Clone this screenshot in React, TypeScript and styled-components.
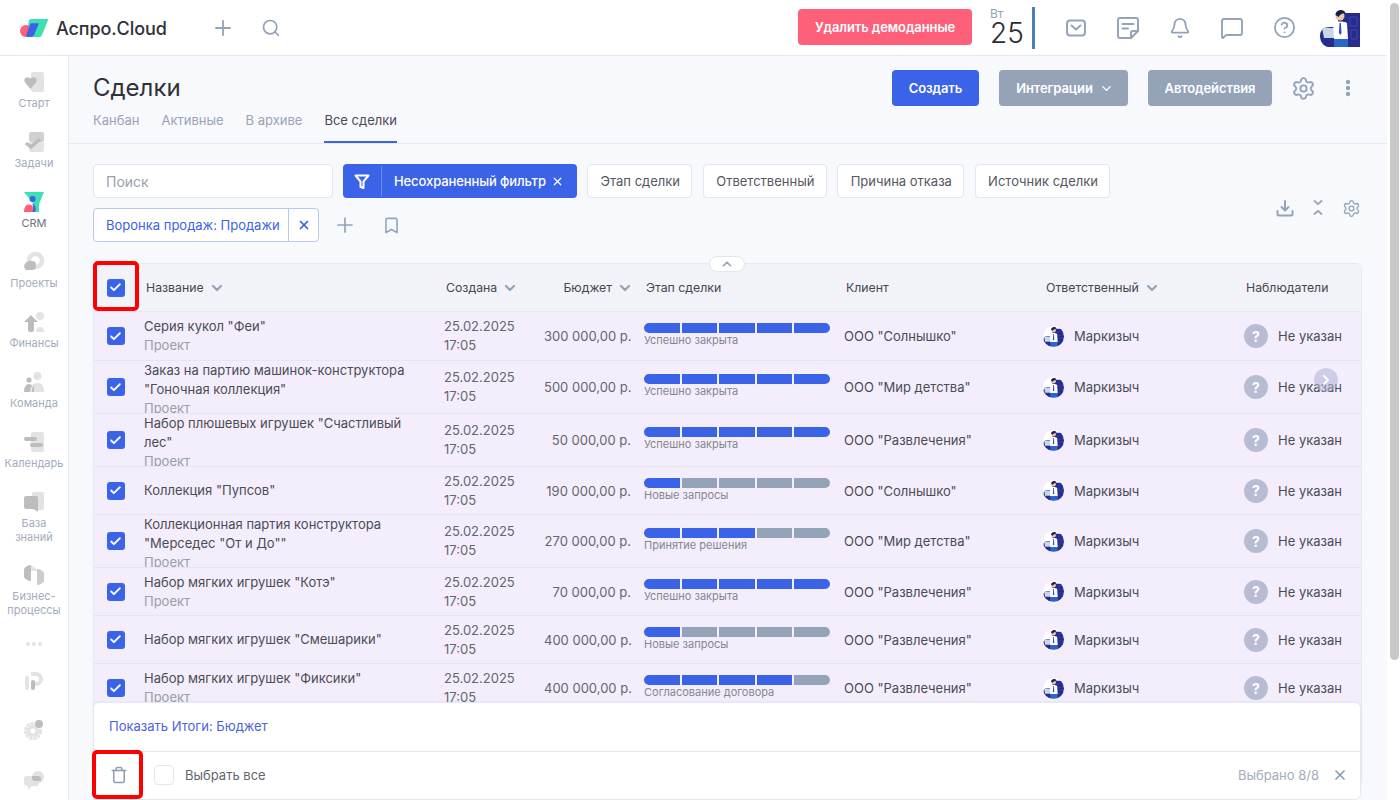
import React from "react";
import styled, { createGlobalStyle } from "styled-components";
import { Plus, Search, Bell, MessageSquare, CircleHelp, Settings, Bookmark, Trash, X, Check, ChevronDown, ChevronUp, ChevronRight } from "lucide-react";

const Global = createGlobalStyle`
  html, body { margin: 0; height: 800px; overflow: hidden; background: #fff; }
  body, button, input { font-family: Inter, "Noto Sans", sans-serif; }
  * { box-sizing: border-box; }
`;

const BLUE = "#3a63e8";
const MUTED = "#94a3b8";

const Shell = styled.div`display: flex; width: 1400px; height: 800px; overflow: hidden; background: #fff;`;
const Page = styled.div`width: 1387px; display: flex; flex-direction: column;`;
const ScrollTrack = styled.div`width: 13px; padding: 3px 1px 0 3px;`;
const ScrollThumb = styled.div`height: 657px; border-radius: 5px; background: #c8c8c8;`;

const TopBar = styled.header`
  height: 56px; flex: none; display: flex; align-items: center; background: #fff;
  border-bottom: 1px solid #e6e9f2; padding: 0 27px 0 19px;
`;
const Brand = styled.div`display: flex; align-items: center; gap: 7px; width: 192px;`;
const BrandName = styled.span`font-size: 18px; font-weight: 500; color: #2f3138; letter-spacing: -0.1px; padding-top: 2px;`;
const BarIcon = styled.span`
  display: flex; color: ${MUTED}; width: ${(p: { $w?: number }) => p.$w ?? 24}px; justify-content: center;
`;
const TopTools = styled.div`display: flex; gap: 24px; align-items: center; margin-left: 0; flex: 1;`;
const DangerButton = styled.button`
  height: 36px; width: 174px; border: 0; border-radius: 4px; background: #ff6079; color: #fff;
  font-size: 13px; font-weight: 600; letter-spacing: -0.1px; margin: 0 18px 1px 0;
`;
const DateBox = styled.div`
  width: 45px; height: 42px; border-right: 3px solid #4a80b4; position: relative; display: flex; flex-direction: column; margin-right: 29px;
`;
const Weekday = styled.span`font-size: 12px; line-height: 14px; color: ${MUTED};`;
const DayNum = styled.span`font-size: 28px; line-height: 25px; font-weight: 300; color: #2b2d33; letter-spacing: 0;`;
const BarIcons = styled.div`display: flex; gap: 28px; align-items: center; margin-right: 24px;`;

const Body = styled.div`flex: 1; display: flex; min-height: 0;`;
const Sidebar = styled.nav`
  width: 69px; flex: none; background: #fff; border-right: 1px solid #e6e9f2; padding-top: 16px;
  display: flex; flex-direction: column; align-items: center;
`;
const NavItem = styled.div`
  height: 60px; width: 100%; display: flex; flex-direction: column; align-items: center; gap: 4px; flex: none;
`;
const NavItemTall = styled(NavItem)`height: ${(p: { $h: number }) => p.$h}px;`;
const NavLabel = styled.span<{ $on?: boolean }>`
  font-size: 11px; line-height: 14px; color: ${(p) => (p.$on ? "#6b7280" : "#a3abbc")}; text-align: center;
`;
const NavIconOnly = styled.div`height: ${(p: { $h: number }) => p.$h}px; flex: none; display: flex; align-items: flex-start;`;

const Content = styled.main`flex: 1; min-width: 0; position: relative; background: #f8f9fd; overflow: hidden;`;
const PageHead = styled.div`
  height: 88px; display: flex; justify-content: space-between; padding: 14px 25px 0 24px; border-bottom: 1px solid #e6e9f2;
`;
const Title = styled.h1`margin: 0; font-size: 24px; line-height: 34px; height: 34px; padding-top: 1px; font-weight: 400; color: #2f3138;`;
const Tabs = styled.div`display: flex; gap: 22px;`;
const Tab = styled.div<{ $on?: boolean }>`
  font-size: 13px; line-height: 32px; height: 39px; color: ${(p) => (p.$on ? "#4a4c55" : "#9aa3b5")};
  border-bottom: 2px solid ${(p) => (p.$on ? BLUE : "transparent")};
`;
const HeadActions = styled.div`display: flex; align-items: flex-start;`;
const ActionButton = styled.button<{ $blue?: boolean; $w: number; $mr: number; $pl?: number }>`
  height: 36px; width: ${(p) => p.$w}px; margin-right: ${(p) => p.$mr}px; border: 0; border-radius: 4px; padding: 0 0 0 ${(p) => p.$pl ?? 0}px;
  background: ${(p) => (p.$blue ? BLUE : "#94a3b8")}; color: #fff; font-size: 13px; font-weight: 600; letter-spacing: -0.1px;
  display: flex; align-items: center; justify-content: center; gap: 6px;
`;
const HeadIcon = styled.span<{ $ml: number }>`
  display: flex; height: 36px; align-items: center; margin-left: ${(p) => p.$ml}px; color: ${MUTED};
`;

const FilterArea = styled.div`display: flex; justify-content: space-between; padding: 20px 26px 0 24px;`;
const FilterRows = styled.div`display: flex; flex-direction: column; gap: 10px;`;
const FilterRow = styled.div`display: flex; align-items: center;`;
const SearchBox = styled.div`
  width: 240px; height: 34px; border: 1px solid #e2e6f0; border-radius: 4px; background: #fff;
  font-size: 14px; color: #9aa0ad; display: flex; align-items: center; padding: 1px 0 0 12px; margin-right: 10px;
`;
const ActiveFilter = styled.div`
  width: 234px; height: 34px; border-radius: 4px; background: ${BLUE}; color: #fff; display: flex; align-items: center;
  font-size: 13px; font-weight: 500; margin-right: 10px; letter-spacing: -0.1px; gap: 5px;
`;
const FilterIconCell = styled.span`
  width: 39px; height: 30px; display: flex; align-items: center; justify-content: center;
  border-right: 1px solid rgba(255,255,255,.25); margin-right: 7px;
`;
const Chip = styled.div`
  height: 34px; padding: 0 11.3px 0 12.5px; border: 1px solid #e2e6f0; border-radius: 4px; background: #fff; margin-right: 10.4px;
  font-size: 13px; color: #555762; display: flex; align-items: center;
`;
const FunnelChip = styled.div`
  width: 226px; height: 34px; border: 1px solid #b9c7f5; border-radius: 4px; background: #fff; display: flex; align-items: center;
  font-size: 13px; color: ${BLUE}; font-weight: 400;
`;
const FunnelText = styled.span`flex: 1; padding-left: 12px; white-space: nowrap;`;
const FunnelClose = styled.span`
  width: 30px; height: 32px; border-left: 1px solid #b9c7f5; display: flex; align-items: center; justify-content: center;
`;
const PlainIcon = styled.span<{ $ml: number }>`display: flex; margin-left: ${(p) => p.$ml}px; color: ${MUTED};`;
const Tools = styled.div`display: flex; gap: 14px; align-items: flex-start; padding-top: 35px;`;

const TableWrap = styled.div`position: relative; margin: 21px 25px 0 24px;`;
const Collapse = styled.div`
  position: absolute; left: 616px; top: -7px; width: 36px; height: 16px; z-index: 2; background: #fff;
  border: 1px solid #e2e6f0; border-radius: 8px; display: flex; align-items: center; justify-content: center; color: ${MUTED};
`;
const Table = styled.div`
  height: 520px; border: 1px solid #e6e9f2; border-radius: 6px 6px 0 0; overflow: hidden; background: #fff;
`;
const cols = "50px 300px 100px 100px 200px 200px 200px 1fr";
const HeadRow = styled.div`
  display: grid; grid-template-columns: ${cols}; height: 48px; background: #f1f3f9; border-bottom: 1px solid #e6e9f2; align-items: center;
`;
const Th = styled.div<{ $right?: boolean }>`
  display: flex; align-items: center; gap: 7px; font-size: 12.3px; font-weight: 400; color: #45474f; padding-left: 2px; white-space: nowrap;
  ${(p) => p.$right && "justify-content: flex-end; padding-right: 13px;"}
`;
const CheckCell = styled.div`display: flex; justify-content: center; padding-right: 7px; align-items: center;`;
const Box = styled.span`
  width: 18px; height: 18px; border-radius: 3px; background: ${BLUE}; color: #fff; display: flex; align-items: center; justify-content: center;
`;
const Row = styled.div<{ $h: number }>`
  display: grid; grid-template-columns: ${cols}; height: ${(p) => p.$h}px; background: #f4eefc; border-bottom: 1px solid #e6e6f3; align-items: center;
`;
const NameCell = styled.div`
  height: 100%; overflow: hidden; display: flex; flex-direction: column; justify-content: safe center; min-width: 0;
  font-size: 13px; line-height: 19px; color: #4a4c55; padding-right: 30px;
`;
const NameText = styled.div`flex: none;`;
const Sub = styled.div`color: #9a9ca6; flex: none;`;
const DateCell = styled.div`font-size: 13px; line-height: 19px; color: #63656f;`;
const Money = styled.div`font-size: 13px; color: #63656f; text-align: right; padding-right: 13px; white-space: nowrap;`;
const Stage = styled.div`width: 186px; margin-top: -2px;`;
const Bar = styled.div`display: flex; gap: 2px; height: 10px; border-radius: 5px; overflow: hidden;`;
const Seg = styled.span<{ $on: boolean }>`flex: 1; background: ${(p) => (p.$on ? BLUE : "#94a3b8")};`;
const StageName = styled.div`font-size: 11px; line-height: 13px; margin-top: 1px; color: #85878f;`;
const Client = styled.div`font-size: 13px; color: #4a4c55; white-space: nowrap;`;
const Person = styled.div`display: flex; align-items: center; gap: 10px; font-size: 13px; color: #4a4c55; white-space: nowrap;`;
const Unknown = styled.span`
  width: 24px; height: 24px; border-radius: 50%; background: #b7bcd3; color: #fff; font-size: 14px; font-weight: 700;
  display: flex; align-items: center; justify-content: center; flex: none;
`;
const FloatArrow = styled.div`
  position: absolute; left: 1221px; top: 105px; width: 24px; height: 24px; border-radius: 50%;
  background: rgba(176, 176, 214, .55); color: #fff; display: flex; align-items: center; justify-content: center;
`;

const Footer = styled.div`
  position: absolute; left: 24px; top: 646px; width: 1268px; height: 98px; background: #fff; border: 1px solid #e6e9f2;
  border-radius: 6px; box-shadow: 0 -1px 3px rgba(120,130,170,.08); z-index: 3;
`;
const TotalsLine = styled.div`
  height: 49px; border-bottom: 1px solid #e6e9f2; padding: 0 0 2px 15px; display: flex; align-items: center;
  font-size: 13px; color: #4a62e0;
`;
const BulkLine = styled.div`height: 47px; display: flex; align-items: center; padding: 0 12px 1px 16px; color: #8c9db5;`;
const EmptyBox = styled.span`width: 20px; height: 20px; border: 1px solid #e2e6f0; border-radius: 4px; margin: 0 11px 0 26px;`;
const BulkText = styled.span`font-size: 13px; color: #63656f; flex: 1;`;
const Counter = styled.span`font-size: 13px; color: #a3abbc; margin-right: 13px;`;
const Marker = styled.div<{ $l: number; $t: number; $w: number; $h: number }>`
  position: absolute; left: ${(p) => p.$l}px; top: ${(p) => p.$t}px; width: ${(p) => p.$w}px; height: ${(p) => p.$h}px;
  border: 4px solid #f00; border-radius: 5px; z-index: 5; pointer-events: none;
`;

const L = "#e3e3e3";
const D = "#bdbdbd";

const Logo = () => (
  <svg width="30" height="18" viewBox="0 0 30 18">
    <path d="M10 1.5C10.5.5 11.5 0 12.5 0H29.5L23 16c-.4 1.2-1.3 2-2.7 2H9C7.7 18 7 17 7.4 15.8Z" fill="#3be0b3" />
    <circle cx="7" cy="12" r="6" fill="#ff6079" />
    <path d="M11 5.5c.4-.8 1-1.2 2-1.2h7L15.500 15c-.5 1.500-1.600 3-3.500 3H8.800C7.500 18 7 17 7.400 15.800Z" fill={BLUE} />
  </svg>
);

const Mail = () => (
  <svg width="22" height="22" viewBox="0 0 22 22" fill="none" stroke={MUTED} strokeWidth="2" strokeLinecap="round" strokeLinejoin="round">
    <rect x="2" y="3.500" width="18" height="15" rx="3" />
    <path d="M6.500 8.500 11 12.500l4.500-4" />
  </svg>
);
const Note = () => (
  <svg width="24" height="24" viewBox="0 0 24 24" fill="none" stroke={MUTED} strokeWidth="2" strokeLinecap="round" strokeLinejoin="round">
    <path d="M15 22H4a2 2 0 0 1-2-2V4a2 2 0 0 1 2-2h16a2 2 0 0 1 2 2v11Z" />
    <path d="M15 22v-5a2 2 0 0 1 2-2h5" />
    <path d="M6.500 8h11M6.500 12.500H12" />
  </svg>
);
const Dots = () => (
  <svg width="6" height="18" viewBox="0 0 6 18" fill={MUTED}>
    <circle cx="3" cy="3" r="2.200" /><circle cx="3" cy="9" r="2.200" /><circle cx="3" cy="15" r="2.200" />
  </svg>
);
const Funnel = () => (
  <svg width="16" height="15" viewBox="0 0 16 15" fill="none" stroke="#fff" strokeWidth="2" strokeLinejoin="round">
    <path d="M1.500 1.500h13L9.500 7.500V14L6.500 13V7.500Z" />
  </svg>
);
const Download = () => (
  <svg width="18" height="18" viewBox="0 0 18 18" fill="none" stroke={MUTED} strokeWidth="2" strokeLinecap="round" strokeLinejoin="round">
    <path d="M9 2v9M5.500 8 9 11.500 12.500 8" />
    <path d="M1.500 12v3a1.500 1.500 0 0 0 1.500 1.500h12a1.500 1.500 0 0 0 1.500-1.500v-3" />
  </svg>
);
const Squeeze = () => (
  <svg width="12" height="18" viewBox="0 0 12 18" fill="none" stroke={MUTED} strokeWidth="1.800" strokeLinecap="round" strokeLinejoin="round">
    <path d="M2.500 2 6 5.200 9.500 2M2.500 15 6 11.800 9.500 15" />
  </svg>
);
const Arrow = () => (
  <svg width="12" height="8" viewBox="0 0 12 8" fill="none" stroke={MUTED} strokeWidth="2.200" strokeLinecap="round" strokeLinejoin="round">
    <path d="M2 2 6 6 10 2" />
  </svg>
);

const Person3D = ({ size }: { size: number }) => (
  <svg width={size} height={size} viewBox="0 0 40 38">
    <path d="M0 27C0 21 4 18 10 18H18V4H40V38H8C3 37 0 32 0 27Z" fill="#252c8c" />
    <path d="M30 8h7v9h-7ZM31 21h6v9h-6Z" fill="none" stroke="#3d46ad" />
    <path d="M2 19h14l3 10H4Z" fill="#c9d6ea" />
    <circle cx="20" cy="7" r="4.500" fill="#f3c5a8" />
    <path d="M15.500 6c0-5 8-7 10-2-3 0-5 1-7 4Z" fill="#16204f" />
    <path d="M13 14c3-2 11-2 14 0l1 16H14Z" fill="#fff" />
    <path d="M19.500 14h1.400l.6 10-1.300 2-1.300-2Z" fill="#2a52c9" />
    <rect x="14" y="30" width="14" height="8" fill="#2a66c9" />
  </svg>
);
const RoundAvatar = styled.span`
  width: 21px; height: 21px; border-radius: 50%; overflow: hidden; display: flex; flex: none; margin-left: -1px;
  background: #fff;
`;

const icons: Record<string, React.ReactNode> = {
  start: <><rect x="7" width="13" height="20" rx="2" fill={L} /><path d="M6.500 17 1 10.500C-1 7 2 3.500 6.500 6.500 11 3.500 14 7 12 10.500Z" fill={D} /></>,
  tasks: <><rect x="5" width="15" height="10" rx="2" fill={D} opacity=".7" /><rect x="5" y="10" width="15" height="10" rx="2" fill={L} /><path d="M2 11l5 4 9-8" fill="none" stroke={D} strokeWidth="3.400" /></>,
  crm: <><path d="M0 0H20L15 12V20H9V11Z" fill="#3be0b3" /><circle cx="8.500" cy="7" r="3" fill={BLUE} /><path d="M0 20c0-5 2-7.500 5-7.500s5 2.500 5 7.500Z" fill="#ff6079" /><path d="M8 11.500c3.500 1.500 5 5.500 3 8.500H8.500c1.500-3 1-6-.5-8.500Z" fill={BLUE} /></>,
  projects: <><circle cx="11.500" cy="8.500" r="6.500" fill="none" stroke={L} strokeWidth="4.500" /><path d="M0 15a6 6 0 0 1 6-6h2a4 4 0 0 1 4 4v1a4 4 0 0 1-4 4H2Z" fill={D} /></>,
  finance: <><circle cx="16" cy="4" r="4" fill={L} /><path d="M12 20c0-4 2-5 4-5s4 1 4 5Z" fill={L} /><path d="M7 3 0 10h4v8a2 2 0 0 0 2 2h2a2 2 0 0 0 2-2v-8h4Z" fill={D} /></>,
  team: <><circle cx="13.500" cy="4" r="4" fill={L} /><circle cx="5" cy="8" r="2.600" fill={D} /><path d="M0 20c0-5 2-8 5-8s5 3 5 8Z" fill={D} /><path d="M6 20c0-6 3-9 7.500-9S20 14 20 20Z" fill={L} /><path d="M8 20c0-3 .4-5 1.600-6.300C10.200 16 10 18 10 20Z" fill={D} /></>,
  calendar: <><rect x="7" width="13" height="20" rx="2" fill={L} /><rect y="5" width="13" height="4" rx="2" fill={D} /><rect x="6" y="11" width="13" height="4" rx="2" fill={D} /></>,
  base: <><rect x="8" width="12" height="18" rx="2" fill={L} /><path d="M2 4H12a2 2 0 0 1 2 2v14l-4-3H2a2 2 0 0 1-2-2V6a2 2 0 0 1 2-2Z" fill={D} /></>,
  proc: <><path d="M7 0v16A8 8 0 0 1 7 0Z" fill={D} /><path d="M7 1a8 8 0 0 1 6 5H7Z" fill={L} /><path d="M13 4v16A8 8 0 0 0 13 4Z" fill={L} /><path d="M13 4v16a8 8 0 0 0 0-16Z" fill={D} opacity=".6" /></>,
  p: <><rect x="1" y="6" width="4" height="14" rx="2" fill={L} /><rect x="7" y="10" width="4" height="10" rx="2" fill={D} /><path d="M7 2h5a7 7 0 0 1 0 14h-1v-4h1a3 3 0 0 0 0-6H7Z" fill={L} /></>,
  gear: <><circle cx="9" cy="11" r="7" fill="none" stroke={L} strokeWidth="4" strokeDasharray="3 .8" /><circle cx="9" cy="11" r="4" fill="none" stroke={L} strokeWidth="3" /><circle cx="15" cy="4" r="4" fill={D} /></>,
  chat: <><path d="M3 6h9a3 3 0 0 1 3 3v4a3 3 0 0 1-3 3H8l-4 4v-4H3a3 3 0 0 1-3-3V9a3 3 0 0 1 3-3Z" fill={L} /><circle cx="14" cy="7" r="6" fill={L} /><path d="M8 6h6a3 3 0 0 1 3 3v2H11a3 3 0 0 1-3-3Z" fill={D} /></>,
};
const NavIcon = ({ k }: { k: string }) => <svg width="20" height="20" viewBox="0 0 20 20">{icons[k]}</svg>;

const nav = [
  ["start", "Старт"], ["tasks", "Задачи"], ["crm", "CRM"], ["projects", "Проекты"],
  ["finance", "Финансы"], ["team", "Команда"], ["calendar", "Календарь"],
];

const rows = [
  { h: 49, name: ["Серия кукол \"Феи\""], sub: true, money: "300 000,00 р.", n: 5, stage: "Успешно закрыта", client: "ООО \"Солнышко\"" },
  { h: 53, name: ["Заказ на партию машинок-конструктора", "\"Гоночная коллекция\""], sub: true, money: "500 000,00 р.", n: 5, stage: "Успешно закрыта", client: "ООО \"Мир детства\"" },
  { h: 53, name: ["Набор плюшевых игрушек \"Счастливый", "лес\""], sub: true, money: "50 000,00 р.", n: 5, stage: "Успешно закрыта", client: "ООО \"Развлечения\"" },
  { h: 48, name: ["Коллекция \"Пупсов\""], sub: false, money: "190 000,00 р.", n: 1, stage: "Новые запросы", client: "ООО \"Солнышко\"" },
  { h: 53, name: ["Коллекционная партия конструктора", "\"Мерседес \"От и До\"\""], sub: true, money: "270 000,00 р.", n: 3, stage: "Принятие решения", client: "ООО \"Мир детства\"" },
  { h: 48, name: ["Набор мягких игрушек \"Котэ\""], sub: true, money: "70 000,00 р.", n: 5, stage: "Успешно закрыта", client: "ООО \"Развлечения\"" },
  { h: 48, name: ["Набор мягких игрушек \"Смешарики\""], sub: false, money: "400 000,00 р.", n: 1, stage: "Новые запросы", client: "ООО \"Развлечения\"" },
  { h: 49, name: ["Набор мягких игрушек \"Фиксики\""], sub: true, money: "400 000,00 р.", n: 4, stage: "Согласование договора", client: "ООО \"Развлечения\"" },
];

const Tick = () => <Check size={13} strokeWidth={3.4} />;

export default function App() {
  return (
    <Shell>
      <Global />
      <Page>
        <TopBar>
          <Brand><Logo /><BrandName>Аспро.Cloud</BrandName></Brand>
          <TopTools>
            <BarIcon><Plus size={24} strokeWidth={1.8} /></BarIcon>
            <BarIcon><Search size={20} strokeWidth={2} /></BarIcon>
          </TopTools>
          <DangerButton>Удалить демоданные</DangerButton>
          <DateBox><Weekday>Вт</Weekday><DayNum>25</DayNum></DateBox>
          <BarIcons>
            <BarIcon><Mail /></BarIcon>
            <BarIcon><Note /></BarIcon>
            <BarIcon><Bell size={22} strokeWidth={2} /></BarIcon>
            <BarIcon><MessageSquare size={24} strokeWidth={1.9} /></BarIcon>
            <BarIcon><CircleHelp size={23} strokeWidth={1.9} /></BarIcon>
          </BarIcons>
          <Person3D size={40} />
        </TopBar>
        <Body>
          <Sidebar>
            {nav.map(([k, t]) => (
              <NavItem key={k}><NavIcon k={k} /><NavLabel $on={k === "crm"}>{t}</NavLabel></NavItem>
            ))}
            <NavItemTall $h={73}><NavIcon k="base" /><NavLabel>База<br />знаний</NavLabel></NavItemTall>
            <NavItemTall $h={76}><NavIcon k="proc" /><NavLabel>Бизнес-<br />процессы</NavLabel></NavItemTall>
            <NavIconOnly $h={29}>
              <svg width="18" height="6" viewBox="0 0 18 6" fill={L}><circle cx="3" cy="3" r="2" /><circle cx="9" cy="3" r="2" /><circle cx="15" cy="3" r="2" /></svg>
            </NavIconOnly>
            <NavIconOnly $h={50}><NavIcon k="p" /></NavIconOnly>
            <NavIconOnly $h={50}><NavIcon k="gear" /></NavIconOnly>
            <NavIconOnly $h={30}><NavIcon k="chat" /></NavIconOnly>
          </Sidebar>
          <Content>
            <PageHead>
              <div>
                <Title>Сделки</Title>
                <Tabs>
                  <Tab>Канбан</Tab><Tab>Активные</Tab><Tab>В архиве</Tab><Tab $on>Все сделки</Tab>
                </Tabs>
              </div>
              <HeadActions>
                <ActionButton $blue $w={87} $mr={20}>Создать</ActionButton>
                <ActionButton $w={129} $mr={20} $pl={3}>Интеграции <ChevronDown size={15} strokeWidth={2.2} /></ActionButton>
                <ActionButton $w={124} $mr={0}>Автодействия</ActionButton>
                <HeadIcon $ml={19}><Settings size={25} strokeWidth={1.8} /></HeadIcon>
                <HeadIcon $ml={29}><Dots /></HeadIcon>
                <HeadIcon $ml={11} />
              </HeadActions>
            </PageHead>
            <FilterArea>
              <FilterRows>
                <FilterRow>
                  <SearchBox>Поиск</SearchBox>
                  <ActiveFilter>
                    <FilterIconCell><Funnel /></FilterIconCell>
                    Несохраненный фильтр
                    <X size={13} strokeWidth={2.4} />
                  </ActiveFilter>
                  <Chip>Этап сделки</Chip>
                  <Chip>Ответственный</Chip>
                  <Chip>Причина отказа</Chip>
                  <Chip>Источник сделки</Chip>
                </FilterRow>
                <FilterRow>
                  <FunnelChip>
                    <FunnelText>Воронка продаж: Продажи</FunnelText>
                    <FunnelClose><X size={14} strokeWidth={3} /></FunnelClose>
                  </FunnelChip>
                  <PlainIcon $ml={14}><Plus size={24} strokeWidth={1.7} /></PlainIcon>
                  <PlainIcon $ml={25}><Bookmark size={19} strokeWidth={2} /></PlainIcon>
                </FilterRow>
              </FilterRows>
              <Tools>
                <Download />
                <PlainIcon $ml={4}><Squeeze /></PlainIcon>
                <PlainIcon $ml={4}><Settings size={19} strokeWidth={1.7} /></PlainIcon>
              </Tools>
            </FilterArea>
            <TableWrap>
              <Collapse><ChevronUp size={14} strokeWidth={3} /></Collapse>
              <Table>
                <HeadRow>
                  <CheckCell><Box><Tick /></Box></CheckCell>
                  <Th>Название <Arrow /></Th>
                  <Th>Создана <Arrow /></Th>
                  <Th $right>Бюджет <Arrow /></Th>
                  <Th>Этап сделки</Th>
                  <Th>Клиент</Th>
                  <Th>Ответственный <Arrow /></Th>
                  <Th>Наблюдатели</Th>
                </HeadRow>
                {rows.map((r) => (
                  <Row key={r.name[0]} $h={r.h}>
                    <CheckCell><Box><Tick /></Box></CheckCell>
                    <NameCell>
                      {r.name.map((l) => <NameText key={l}>{l}</NameText>)}
                      {r.sub && <Sub>Проект</Sub>}
                    </NameCell>
                    <DateCell>25.02.2025<br />17:05</DateCell>
                    <Money>{r.money}</Money>
                    <Stage>
                      <Bar>{[0, 1, 2, 3, 4].map((i) => <Seg key={i} $on={i < r.n} />)}</Bar>
                      <StageName>{r.stage}</StageName>
                    </Stage>
                    <Client>{r.client}</Client>
                    <Person><RoundAvatar><Person3D size={21} /></RoundAvatar>Маркизыч</Person>
                    <Person><Unknown>?</Unknown>Не указан</Person>
                  </Row>
                ))}
              </Table>
              <FloatArrow><ChevronRight size={16} strokeWidth={3} /></FloatArrow>
            </TableWrap>
            <Footer>
              <TotalsLine>Показать Итоги: Бюджет</TotalsLine>
              <BulkLine>
                <Trash size={18} strokeWidth={2} />
                <EmptyBox />
                <BulkText>Выбрать все</BulkText>
                <Counter>Выбрано 8/8</Counter>
                <X size={16} strokeWidth={2.6} />
              </BulkLine>
            </Footer>
            <Marker $l={24} $t={205} $w={46} $h={50} />
            <Marker $l={23} $t={694} $w={51} $h={49} />
          </Content>
        </Body>
      </Page>
      <ScrollTrack><ScrollThumb /></ScrollTrack>
    </Shell>
  );
}
